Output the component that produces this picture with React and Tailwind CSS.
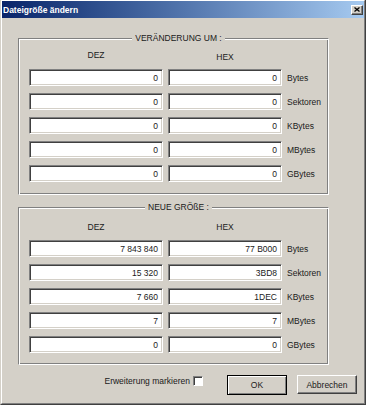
const font = { fontFamily: '"Liberation Sans", Arial, sans-serif' };

const groups = [
  {
    title: 'VERÄNDERUNG UM :',
    pad: 'pt-[7px] pb-[12px]',
    hexShift: 'mt-[2px]',
    rows: [
      ['0', '0', 'Bytes'],
      ['0', '0', 'Sektoren'],
      ['0', '0', 'KBytes'],
      ['0', '0', 'MBytes'],
      ['0', '0', 'GBytes'],
    ],
  },
  {
    title: 'NEUE GRÖßE :',
    pad: 'pt-[10px] pb-[11px]',
    hexShift: '',
    rows: [
      ['7 843 840', '77 B000', 'Bytes'],
      ['15 320', '3BD8', 'Sektoren'],
      ['7 660', '1DEC', 'KBytes'],
      ['7', '7', 'MBytes'],
      ['0', '0', 'GBytes'],
    ],
  },
];

function Field({ value }) {
  return (
    <div className="h-[17px] bg-white border border-t-[#808080] border-l-[#808080] border-r-white border-b-white shadow-[inset_1px_1px_0_#404040,inset_-1px_-1px_0_#d4d0c8] flex items-center justify-end pr-[4px] leading-[10px]">
      {value}
    </div>
  );
}

function Group({ group, className }) {
  return (
    <fieldset
      className={`w-[311px] border border-t-[#808080] border-l-[#808080] border-r-white border-b-white shadow-[inset_1px_1px_0_#fff,inset_-1px_-1px_0_#808080] pl-[10px] ${group.pad} ${className}`}
    >
      <legend className="mx-auto px-[3px] bg-[#d4d0c8] leading-[10px]">{group.title}</legend>
      <div className="grid grid-cols-[134px_114px_auto] gap-x-[5px] gap-y-[7px]">
        <div className="text-center leading-[10px] h-[10px] mb-[1px]">DEZ</div>
        <div className={`text-center leading-[10px] h-[10px] ${group.hexShift}`}>HEX</div>
        <div />
        {group.rows.map(([dez, hex, unit]) => (
          <div key={unit} className="contents">
            <Field value={dez} />
            <Field value={hex} />
            <div className="flex items-center leading-[10px]">{unit}</div>
          </div>
        ))}
      </div>
    </fieldset>
  );
}

export default function App() {
  return (
    <div
      className="w-[366px] h-[405px] border border-t-0 border-l-[#d4d0c8] border-r-[#404040] border-b-[#404040] text-[8.5px] text-[#1a1a1a]"
      style={font}
    >
      <div className="h-full flex flex-col bg-[#d4d0c8] border border-t-white border-l-white border-r-[#808080] border-b-[#808080]">
        <div className="h-[17px] flex items-center justify-between bg-linear-to-r from-[#0a246a] to-[#a6caf0] pl-[1px] pr-[1px]">
          <span className="text-white font-bold text-[8.5px] leading-[10px]">Dateigröße ändern</span>
          <div className="w-[12px] h-[10px] flex items-center justify-center bg-[#d4d0c8] border border-t-white border-l-white border-r-[#404040] border-b-[#404040] shadow-[inset_-1px_-1px_0_#808080]">
            <svg width="6" height="5" viewBox="0 0 6 5">
              <path d="M0.5 0.5 L5.5 4.5 M5.5 0.5 L0.5 4.5" stroke="#000" strokeWidth="1.3" />
            </svg>
          </div>
        </div>

        <div className="flex flex-col pl-[16px] pr-[7px] pt-[15px]">
          <Group group={groups[0]} />
          <Group group={groups[1]} className="mt-[7px]" />

          <div className="mt-[10px] flex items-start justify-end">
            <span className="mt-[1px] leading-[10px] mr-[3px]">Erweiterung markieren</span>
            <div className="mt-[1px] w-[10px] h-[10px] bg-white border border-t-[#808080] border-l-[#808080] border-r-white border-b-white shadow-[inset_1px_1px_0_#404040]" />
            <button className="ml-[24px] w-[60px] h-[20px] border border-black bg-[#d4d0c8] shadow-[inset_1px_1px_0_#fff,inset_-1px_-1px_0_#808080] leading-[10px]">
              OK
            </button>
            <button className="ml-[10px] w-[60px] h-[19px] bg-[#d4d0c8] border border-t-white border-l-white border-r-[#404040] border-b-[#404040] shadow-[inset_-1px_-1px_0_#808080] leading-[10px]">
              Abbrechen
            </button>
          </div>
        </div>
      </div>
    </div>
  );
}
